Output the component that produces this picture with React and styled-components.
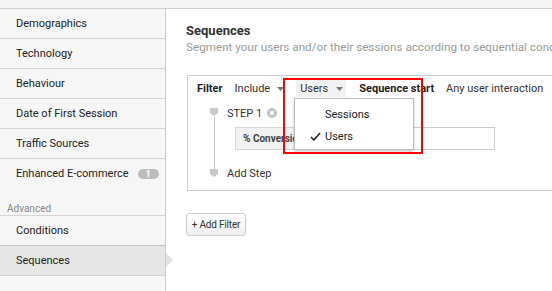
import styled, { createGlobalStyle } from "styled-components";

const GlobalStyle = createGlobalStyle`
  html, body {
    margin: 0;
    padding: 0;
    background: #fff;
  }
  body {
    font-family: Roboto, "Liberation Sans", Arial, sans-serif;
    color: #333;
    width: 552px;
    height: 291px;
    overflow: hidden;
  }
`;

const TopStrip = styled.div`
  height: 8px;
  background: #f5f5f5;
  border-bottom: 1px solid #d0d0d0;
`;

const Layout = styled.div`
  display: flex;
  height: 282px;
`;

const Sidebar = styled.nav`
  position: relative;
  width: 165px;
  flex-shrink: 0;
  background: #f6f6f6;
  border-right: 1px solid #ccc;
`;

const NavItem = styled.div`
  position: relative;
  display: flex;
  align-items: center;
  height: 29px;
  padding-left: 16px;
  font-size: 11px;
  white-space: nowrap;
  color: #222;
  border-bottom: ${(p) => (p.$noBorder ? "none" : "1px solid #d4d4d4")};
  background: ${(p) => (p.$active ? "#e6e6e6" : "transparent")};
  ${(p) => p.$active && "border-top: 1px solid #c4c4c4; margin-top: -1px;"}
`;

const SectionLabel = styled.div`
  height: 28px;
  display: flex;
  align-items: flex-end;
  padding: 0 0 0 7px;
  box-sizing: border-box;
  font-size: 10px;
  line-height: 12px;
  color: #888;
  border-bottom: 1px solid #d4d4d4;
`;

const Badge = styled.span`
  margin-left: 9px;
  width: 21px;
  height: 10px;
  border-radius: 5px;
  background: #bcbcbc;
  color: #fff;
  font-size: 9px;
  font-weight: 700;
  display: flex;
  align-items: center;
  justify-content: center;
`;

const ActiveArrow = styled.span`
  position: absolute;
  right: -8px;
  top: 7px;
  width: 0;
  height: 0;
  border-top: 7px solid transparent;
  border-bottom: 7px solid transparent;
  border-left: 7px solid #e2e2e2;
  z-index: 2;
`;

const Main = styled.main`
  position: relative;
  flex: 1;
  min-width: 0;
  overflow: hidden;
  padding: 14px 0 0 20px;
  white-space: nowrap;
`;

const Title = styled.h2`
  margin: 0;
  font-size: 13px;
  font-weight: 700;
  color: #333;
  line-height: 16px;
`;

const Subtitle = styled.p`
  margin: 0;
  font-size: 11.7px;
  color: #999;
  line-height: 16px;
`;

const FilterBox = styled.div`
  margin-top: 20px;
  margin-left: 1px;
  width: 400px;
  height: 116px;
  border: 1px solid #ccc;
  border-right: none;
  padding: 4px 0 0 9px;
  box-sizing: border-box;
`;

const FilterRow = styled.div`
  display: flex;
  align-items: center;
  height: 17px;
  font-size: 11px;
`;

const Label = styled.span`
  font-weight: 700;
  color: #222;
  margin-right: ${(p) => p.$gap}px;
`;

const Select = styled.span`
  display: inline-flex;
  align-items: center;
  height: 17px;
  padding: 0 ${(p) => (p.$boxed ? 3 : 0)}px 0 ${(p) => (p.$boxed ? 4 : 0)}px;
  margin-right: ${(p) => p.$gap}px;
  background: ${(p) => (p.$boxed ? "#f1f1f1" : "transparent")};
  color: #333;
  gap: ${(p) => p.$caretGap}px;
`;

const Caret = () => (
  <svg width="7" height="4" viewBox="0 0 7 4">
    <path d="M0 0h7L3.5 4z" fill="#777" />
  </svg>
);

const Steps = styled.div`
  display: grid;
  grid-template-columns: 21px 1fr;
  margin-left: 9px;
`;

const Track = styled.div`
  display: flex;
  flex-direction: column;
  align-items: center;
  width: 16px;
`;

const Marker = styled.svg`
  display: block;
  flex-shrink: 0;
`;

const TrackLine = styled.div`
  width: 1px;
  flex: 1;
  background: #c8c8c8;
`;

const StepBody = styled.div`
  display: flex;
  flex-direction: column;
`;

const StepHead = styled.div`
  display: flex;
  align-items: center;
  gap: 5px;
  height: 14px;
  margin-top: 9px;
  font-size: 11px;
  color: #333;
`;

const StepFields = styled.div`
  display: flex;
  gap: 2px;
  margin: 7px 0 0 8px;
  height: 23px;
`;

const MetricSelect = styled.div`
  width: 118px;
  box-sizing: border-box;
  border: 1px solid #d6d6d6;
  background: #f1f1f1;
  font-size: 10px;
  font-weight: 700;
  color: #444;
  display: flex;
  align-items: center;
  padding-left: 7px;
`;

const ValueInput = styled.div`
  width: 140px;
  box-sizing: border-box;
  border: 1px solid #ccc;
  background: #fff;
`;

const AddStep = styled.div`
  margin-top: 17px;
  font-size: 11px;
  line-height: 14px;
  color: #333;
`;

const AddFilterButton = styled.button`
  margin-top: 22px;
  width: 60px;
  height: 23px;
  padding: 0;
  border: 1px solid #ccc;
  border-radius: 3px;
  background: linear-gradient(#fff, #efefef);
  font-family: inherit;
  font-size: 10px;
  letter-spacing: -0.2px;
  color: #333;
`;

const Menu = styled.div`
  position: absolute;
  left: 128px;
  top: 89px;
  width: 120px;
  height: 52px;
  box-sizing: border-box;
  background: #fff;
  border: 1px solid #bbb;
  box-shadow: 0 2px 3px rgba(0, 0, 0, 0.2);
  padding-top: 4px;
  z-index: 3;
`;

const MenuItem = styled.div`
  display: flex;
  align-items: center;
  height: 22px;
  font-size: 11px;
  color: #222;
  padding-left: 15px;
  gap: 4px;
`;

const CheckSlot = styled.span`
  width: 11px;
  display: inline-flex;
`;

const Highlight = styled.div`
  position: absolute;
  left: 117px;
  top: 69px;
  width: 140px;
  height: 76px;
  box-sizing: border-box;
  border: 2px solid #f00;
  z-index: 4;
`;

const navItems = [
  "Demographics",
  "Technology",
  "Behaviour",
  "Date of First Session",
  "Traffic Sources",
];

export default function App() {
  return (
    <>
      <GlobalStyle />
      <TopStrip />
      <Layout>
        <Sidebar>
          {navItems.map((n) => (
            <NavItem key={n}>{n}</NavItem>
          ))}
          <NavItem $noBorder>
            Enhanced E-commerce
            <Badge>1</Badge>
          </NavItem>
          <SectionLabel>Advanced</SectionLabel>
          <NavItem>Conditions</NavItem>
          <NavItem $active>
            Sequences
            <ActiveArrow />
          </NavItem>
        </Sidebar>
        <Main>
          <Title>Sequences</Title>
          <Subtitle>
            Segment your users and/or their sessions according to sequential conditions.
          </Subtitle>
          <FilterBox>
            <FilterRow>
              <Label $gap={12}>Filter</Label>
              <Select $gap={12} $caretGap={7}>
                Include <Caret />
              </Select>
              <Select $boxed $gap={13} $caretGap={8}>
                Users <Caret />
              </Select>
              <Label $gap={12}>Sequence start</Label>
              <Select $gap={0} $caretGap={10}>
                Any user interaction <Caret />
              </Select>
            </FilterRow>
            <Steps>
              <Track>
                <Marker width="8" height="8" viewBox="0 0 8 8" style={{ marginTop: 11 }}>
                  <path d="M0 0h8v5L4 8 0 5z" fill="#c8c8c8" />
                </Marker>
                <TrackLine />
                <Marker width="8" height="8" viewBox="0 0 8 8" style={{ marginBottom: 4 }}>
                  <path d="M0 0h8v5L4 8 0 5z" fill="#c8c8c8" />
                </Marker>
              </Track>
              <StepBody>
                <StepHead>
                  STEP 1
                  <svg width="10" height="10" viewBox="0 0 10 10">
                    <circle cx="5" cy="5" r="5" fill="#c4c4c4" />
                    <path d="M3.2 3.2l3.6 3.6M6.8 3.2l-3.6 3.6" stroke="#fff" strokeWidth="1.3" />
                  </svg>
                </StepHead>
                <StepFields>
                  <MetricSelect>% Conversions</MetricSelect>
                  <ValueInput />
                </StepFields>
                <AddStep>Add Step</AddStep>
              </StepBody>
            </Steps>
          </FilterBox>
          <AddFilterButton>+ Add Filter</AddFilterButton>
          <Menu>
            <MenuItem>
              <CheckSlot />
              Sessions
            </MenuItem>
            <MenuItem>
              <CheckSlot>
                <svg width="11" height="9" viewBox="0 0 11 9">
                  <path d="M1 5l3 3 6-7" fill="none" stroke="#222" strokeWidth="1.6" />
                </svg>
              </CheckSlot>
              Users
            </MenuItem>
          </Menu>
          <Highlight />
        </Main>
      </Layout>
    </>
  );
}
